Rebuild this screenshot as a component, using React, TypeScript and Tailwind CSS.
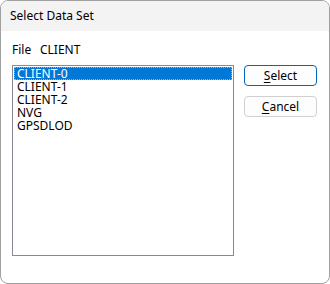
const items = ["CLIENT-0", "CLIENT-1", "CLIENT-2", "NVG", "GPSDLOD"];

export default function App() {
  return (
    <div className="w-[330px] h-[284px] bg-white font-['Segoe_UI','Noto_Sans',sans-serif] text-[12px] text-black">
      <div className="flex flex-col w-full h-full border border-[#a0a0a0] rounded-[8px] overflow-hidden bg-white">
        <div className="h-[30px] bg-[#f3f3f3] flex items-center pl-[9px] shrink-0">
          Select Data Set
        </div>
        <div className="flex flex-col pl-[11px] pt-[11px]">
          <div className="flex h-[16px] items-center">
            <span className="w-[28px]">File</span>
            <span>CLIENT</span>
          </div>
          <div className="flex mt-[7px]">
            <div className="w-[222px] h-[191px] border border-[#868a91] p-px">
              {items.map((it, i) => (
                <div
                  key={it}
                  className={
                    i === 0
                      ? "h-[13px] leading-[11px] px-[2px] bg-[#0078d7] text-white border border-dotted border-[#ff9d2f]"
                      : "h-[13px] leading-[13px] px-[3px]"
                  }
                >
                  {it}
                </div>
              ))}
            </div>
            <div className="flex flex-col gap-[10px] ml-[10px]">
              <button className="w-[73px] h-[21px] border border-[#0067c0] rounded-[4px] bg-[#fdfdfd] leading-none">
                <span className="underline underline-offset-2">S</span>elect
              </button>
              <button className="w-[73px] h-[21px] border border-[#d0d0d0] rounded-[4px] bg-[#fdfdfd] leading-none">
                <span className="underline underline-offset-2">C</span>ancel
              </button>
            </div>
          </div>
        </div>
      </div>
    </div>
  );
}
